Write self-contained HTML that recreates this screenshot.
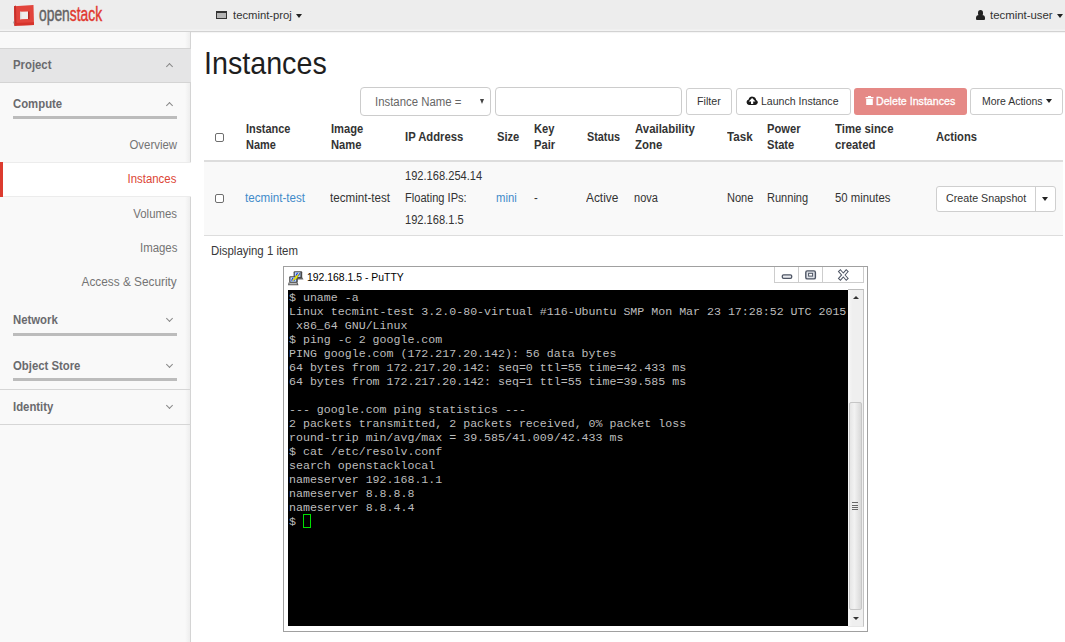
<!DOCTYPE html>
<html><head><meta charset="utf-8">
<style>
*{margin:0;padding:0;box-sizing:border-box}
html,body{width:1065px;height:642px;overflow:hidden;background:#fff;font-family:"Liberation Sans",sans-serif;color:#333}
.a{position:absolute;white-space:nowrap;line-height:1;transform-origin:0 0}
.r{transform-origin:100% 0}
.sh{font-weight:bold;color:#6a6a6e;font-size:12px;transform:scaleX(.945)}
.si{color:#747474;font-size:12px;transform:scaleX(.95)}
.ul{position:absolute;left:13px;width:164px;height:3px;background:#bcbcbc}
.hline{position:absolute;left:0;width:191px;height:1px;background:#d6d6d6}
.chev{position:absolute;width:5px;height:5px;border-left:1px solid #888;border-top:1px solid #888}
.th{font-weight:bold;color:#333;font-size:12px;line-height:15.7px;transform:scaleX(.93)}
.td{color:#333;font-size:12px;transform:scaleX(.94)}
.bt{font-size:11px;color:#333;transform:scaleX(.96)}
.btn{position:absolute;border:1px solid #cfcfcf;border-radius:3px;background:#fff}
.car{position:absolute;width:0;height:0;border-left:3px solid transparent;border-right:3px solid transparent;border-top:4px solid #222}
.term{position:absolute;left:289px;top:291px;font-family:"Liberation Mono",monospace;font-size:11.625px;line-height:14px;color:#bdbdbd;white-space:pre}
</style></head><body>

<!-- header -->
<div class="a" style="left:0;top:0;width:1065px;height:32px;background:linear-gradient(180deg,#ededed 0,#ededed 29px,#f3f3f3 30px);border-bottom:1px solid #d2d2d2;box-shadow:0 1px 1px rgba(0,0,0,.04)"></div>
<svg class="a" style="left:12px;top:4px" width="24" height="23" viewBox="0 0 24 23">
 <path d="M2 2.2 L21.5 1 L22 21 L2.5 21.8 Z" fill="#e2443c"/>
 <path d="M2 2.2 L4 1.6 L4.5 21.6 L2.5 21.8Z" fill="#c8302a"/>
 <path d="M2.5 19 L22 18.3 L22 21 L2.5 21.8Z" fill="#d6332b"/>
 <path d="M8 7.8 L16 7.6 L16 15 L8 15.2Z" fill="#eeeeee"/>
 <path d="M8 7.8 L9.3 7.8 L9.3 15.2 L8 15.2Z" fill="#d8d8d8"/>
 <path d="M16 7.6 L17.5 7.4 L17.5 15.6 L16 15 Z" fill="#b02a24"/>
 <path d="M1 18 L2.3 17 L2.5 21.8 L3 22.5 Z" fill="#777" opacity=".6"/>
</svg>
<div class="a" style="left:39px;top:4.3px;font-size:20.5px;color:#626262;transform:scaleX(.675);-webkit-text-stroke:0.45px #626262">open<span style="color:#e1382f;-webkit-text-stroke:0.45px #e1382f">stack</span></div>
<div class="a" style="left:216px;top:11px;width:11px;height:8px;border:1px solid #333;border-top-width:2px;background:#b5b5b5"></div>
<div class="a" style="left:233px;top:9.6px;font-size:11.5px;color:#333;transform:scaleX(.98)">tecmint-proj</div>
<div class="car" style="left:296px;top:14px"></div>

<div class="a" style="left:976px;top:10px;width:9px;height:10px;">
 <div style="position:absolute;left:2px;top:0;width:5px;height:5.5px;border-radius:50%;background:#222"></div>
 <div style="position:absolute;left:0;top:5px;width:9px;height:5px;border-radius:3px 3px 1px 1px;background:#222"></div>
</div>
<div class="a" style="left:989.6px;top:9.6px;font-size:11.5px;color:#333;transform:scaleX(.99)">tecmint-user</div>
<div class="car" style="left:1057px;top:14px"></div>

<!-- sidebar -->
<div class="a" style="left:0;top:32px;width:191px;height:610px;background:linear-gradient(90deg,#f9f9f9 0,#f9f9f9 185px,#eeeeee 190px);border-right:1px solid #d4d4d4"></div>
<div class="a" style="left:0;top:48px;width:191px;height:35px;background:#e5e5e6;border-top:1px solid #d4d4d4;border-bottom:1px solid #d4d4d4"></div>
<div class="a sh" style="left:13px;top:58.6px">Project</div>
<div class="chev" style="left:167px;top:64px;transform:rotate(45deg)"></div>
<div class="a sh" style="left:13px;top:98.2px">Compute</div>
<div class="chev" style="left:167px;top:103px;transform:rotate(45deg)"></div>
<div class="ul" style="top:116px"></div>
<div class="a si r" style="right:888px;top:138.7px">Overview</div>
<div class="a" style="left:0;top:162px;width:191px;height:35px;background:#fff;border-top:1px solid #ececec;border-bottom:1px solid #ececec"></div>
<div class="a" style="left:0;top:162px;width:3px;height:35px;background:#dc3b2f"></div>
<div class="a si r" style="right:889px;top:172.9px;color:#dc4535">Instances</div>
<div class="a si r" style="right:888px;top:207.5px">Volumes</div>
<div class="a si r" style="right:888px;top:242px">Images</div>
<div class="a si r" style="right:888px;top:275.8px;transform:scaleX(.984)">Access &amp; Security</div>
<div class="a sh" style="left:13px;top:313.7px">Network</div>
<div class="chev" style="left:167px;top:316px;transform:rotate(-135deg)"></div>
<div class="ul" style="top:333px"></div>
<div class="a sh" style="left:13px;top:359.6px">Object Store</div>
<div class="chev" style="left:167px;top:362px;transform:rotate(-135deg)"></div>
<div class="ul" style="top:378px"></div>
<div class="hline" style="top:389px"></div>
<div class="a sh" style="left:13px;top:400.5px">Identity</div>
<div class="chev" style="left:167px;top:403px;transform:rotate(-135deg)"></div>
<div class="hline" style="top:424px"></div>

<!-- main -->
<div class="a" style="left:203.7px;top:48px;font-size:30.5px;color:#1e1e1e;transform:scaleX(.94)">Instances</div>

<div class="a" style="left:360px;top:87px;width:131px;height:29px;border:1px solid #cccccc;border-radius:4px"></div>
<div class="a" style="left:375px;top:96.1px;font-size:12px;color:#666;transform:scaleX(.948)">Instance Name =</div>
<div class="a" style="left:480px;top:98.5px;width:0;height:0;border-left:2.8px solid transparent;border-right:2.8px solid transparent;border-top:5px solid #444"></div>
<div class="a" style="left:495px;top:87px;width:187px;height:29px;border:1px solid #cccccc;border-radius:4px"></div>
<div class="btn" style="left:686px;top:88px;width:46px;height:27px"></div>
<div class="a bt" style="left:697.3px;top:95.6px;transform:scaleX(.97)">Filter</div>
<div class="btn" style="left:736px;top:88px;width:115px;height:27px"></div>
<svg class="a" style="left:746px;top:96px" width="12" height="9" viewBox="0 0 12 9"><path d="M2.8 9 H9.3 A2.6 2.6 0 0 0 10.2 4 A3.9 3.9 0 0 0 2.6 3.4 A2.9 2.9 0 0 0 2.8 9Z" fill="#1a1a1a"/><path d="M6.1 1.9 L9.5 5.4 H7.2 V8 H5 V5.4 H2.7Z" fill="#fff"/></svg>
<div class="a bt" style="left:761px;top:95.6px">Launch Instance</div>
<div class="a" style="left:854px;top:88px;width:113px;height:27px;background:#e58986;border-radius:3px"></div>
<svg class="a" style="left:865px;top:96px" width="9" height="9" viewBox="0 0 9 9"><rect x="0.5" y="1" width="8" height="1.3" fill="#fff"/><rect x="3" y="0" width="3" height="1.5" fill="#fff"/><rect x="1.2" y="2.8" width="6.6" height="6.2" fill="#fff"/></svg>
<div class="a bt" style="left:876px;top:95.6px;color:#fff;transform:scaleX(.967);-webkit-text-stroke:0.3px #fff">Delete Instances</div>
<div class="btn" style="left:970px;top:88px;width:93px;height:27px"></div>
<div class="a bt" style="left:981.6px;top:95.6px;transform:scaleX(.953)">More Actions</div>
<div class="car" style="left:1046px;top:99px"></div>

<!-- table header -->
<div class="a" style="left:215px;top:133px;width:9px;height:9px;border:1px solid #6e6e6e;border-radius:2px;background:#fff"></div>
<div class="a th" style="left:245.5px;top:122.1px;transform:scaleX(.912)">Instance<br>Name</div>
<div class="a th" style="left:330.5px;top:122.1px">Image<br>Name</div>
<div class="a th" style="left:404.6px;top:129.7px;transform:scaleX(.938)">IP Address</div>
<div class="a th" style="left:496.7px;top:129.7px">Size</div>
<div class="a th" style="left:534px;top:122.1px">Key<br>Pair</div>
<div class="a th" style="left:587.4px;top:129.7px;transform:scaleX(.90)">Status</div>
<div class="a th" style="left:634.6px;top:122.1px;transform:scaleX(.95)">Availability<br>Zone</div>
<div class="a th" style="left:726.6px;top:129.7px;transform:scaleX(.97)">Task</div>
<div class="a th" style="left:767.1px;top:122.1px">Power<br>State</div>
<div class="a th" style="left:835.2px;top:122.1px;transform:scaleX(.946)">Time since<br>created</div>
<div class="a th" style="left:935.5px;top:129.7px;transform:scaleX(.93)">Actions</div>
<div class="a" style="left:204px;top:160px;width:859px;height:2px;background:#dddddd"></div>
<div class="a" style="left:204px;top:162px;width:859px;height:74px;background:#f9f9f9;border-bottom:1px solid #dddddd"></div>

<div class="a" style="left:215px;top:194px;width:9px;height:9px;border:1px solid #6e6e6e;border-radius:2px;background:#fff"></div>
<div class="a td" style="left:245px;top:192.4px;color:#428bca;transform:scaleX(.968)">tecmint-test</div>
<div class="a td" style="left:330px;top:192.4px;transform:scaleX(.968)">tecmint-test</div>
<div class="a td" style="left:405px;top:166.1px;line-height:21.85px;transform:scaleX(.925)">192.168.254.14<br>Floating IPs:<br>192.168.1.5</div>
<div class="a td" style="left:496.2px;top:192.4px;color:#428bca">mini</div>
<div class="a td" style="left:533.7px;top:192px">-</div>
<div class="a td" style="left:586.3px;top:192.4px;transform:scaleX(.99)">Active</div>
<div class="a td" style="left:634.4px;top:192.4px;transform:scaleX(.92)">nova</div>
<div class="a td" style="left:726.7px;top:192.4px;transform:scaleX(.92)">None</div>
<div class="a td" style="left:766.8px;top:192.4px;transform:scaleX(.92)">Running</div>
<div class="a td" style="left:834.7px;top:192.4px;transform:scaleX(.945)">50 minutes</div>
<div class="btn" style="left:936px;top:186px;width:120px;height:26px;border-radius:3px"></div>
<div class="a" style="left:1035px;top:186px;width:1px;height:26px;background:#cfcfcf"></div>
<div class="a" style="left:945.7px;top:193px;font-size:11.5px;color:#333;transform:scaleX(.93)">Create Snapshot</div>
<div class="car" style="left:1042px;top:197px"></div>

<div class="a" style="left:211.4px;top:244.9px;font-size:12px;color:#383838;transform:scaleX(.952)">Displaying 1 item</div>

<!-- PuTTY -->
<div class="a" style="left:283px;top:266px;width:585px;height:366px;background:#fff;border:1px solid #a0a0a0"></div>
<svg class="a" style="left:285px;top:268px" width="22" height="20" viewBox="0 0 22 20">
 <path d="M10.5 9.5 H17.5 L18.5 11.5 H11Z" fill="#6a6a6a"/>
 <rect x="8.6" y="3.2" width="8.6" height="7" rx="1" fill="#4a4a4a"/>
 <rect x="9.8" y="4.3" width="5.6" height="4.6" fill="#b8d8ff"/>
 <path d="M10.5 7.5 L12 4.8 L13 5 L11.5 8Z M13 7.8 L14.5 5 L15.2 5.5 L13.8 8.2Z" fill="#1030e0"/>
 <path d="M3.5 14.5 H12.5 L13.5 17.2 H3Z" fill="#5a5a5a"/>
 <path d="M4.5 15.2 H11.5 L12 16.2 H4.2Z" fill="#dcdcdc"/>
 <rect x="4.2" y="8.2" width="8.6" height="6.6" rx="1" fill="#4a4a4a"/>
 <rect x="5.4" y="9.3" width="5.8" height="4.4" fill="#b8d8ff"/>
 <path d="M6 12.5 L7.5 9.8 L8.5 10 L7 12.7Z M8.6 12.8 L10 10.2 L10.8 10.6 L9.4 13Z" fill="#1030e0"/>
 <path d="M7 12.3 L10.5 9.2 L10 8.6 L14.8 5.4 L12 9.3 L12.8 9.7 L8.5 12.6Z" fill="#f0f000" stroke="#a08000" stroke-width=".3"/>
</svg>
<div class="a" style="left:307.3px;top:272.3px;font-size:11.5px;color:#000;transform:scaleX(.906)">192.168.1.5 - PuTTY</div>
<div class="a" style="left:774px;top:267px;width:90px;height:16px;border:1px solid #cdcdcd;border-top:none;background:#fff"></div>
<div class="a" style="left:798px;top:267px;width:1px;height:15px;background:#cdcdcd"></div>
<div class="a" style="left:822px;top:267px;width:1px;height:15px;background:#cdcdcd"></div>
<svg class="a" style="left:778px;top:268px" width="74" height="13" viewBox="0 0 74 13">
 <rect x="4.3" y="6.8" width="9.4" height="3.6" rx="1.3" fill="#e8eaee" stroke="#4e5564" stroke-width="1.3"/>
 <rect x="27.8" y="2.9" width="9.6" height="8" rx="1.5" fill="#dfe2e8" stroke="#4e5564" stroke-width="1.4"/>
 <rect x="30.6" y="5.3" width="4" height="2.8" fill="#fff" stroke="#4e5564" stroke-width="1"/>
 <path d="M62.3 3.6 L68.3 10.4 M68.3 3.6 L62.3 10.4" stroke="#4e5564" stroke-width="3.6" stroke-linecap="square"/>
 <path d="M62.3 3.6 L68.3 10.4 M68.3 3.6 L62.3 10.4" stroke="#fff" stroke-width="1.6" stroke-linecap="square"/>
</svg>

<div class="a" style="left:288px;top:290px;width:560px;height:336px;background:#000"></div>
<div class="a" style="left:848px;top:289px;width:16px;height:338px;background:linear-gradient(90deg,#f7f7f7,#efefef 30%,#efefef);border-top:1px solid #bdbdbd;border-right:1px solid #c4c4c4;border-bottom:1px solid #e6e6e6"></div>
<div class="car" style="left:853px;top:296px;border-top:none;border-bottom:3px solid #333"></div>
<div class="a" style="left:849px;top:402px;width:13px;height:208px;background:linear-gradient(90deg,#e6e6e6,#f2f2f2 40%,#d9d9d9);border:1px solid #c6c6c6;border-radius:2px"></div>
<div class="a" style="left:852px;top:502px;width:6px;height:8px;background:repeating-linear-gradient(180deg,#666 0 1px,transparent 1px 2.5px)"></div>
<div class="car" style="left:853px;top:617px;border-top:3px solid #333"></div>

<div class="term">$ uname -a
Linux tecmint-test 3.2.0-80-virtual #116-Ubuntu SMP Mon Mar 23 17:28:52 UTC 2015
 x86_64 GNU/Linux
$ ping -c 2 google.com
PING google.com (172.217.20.142): 56 data bytes
64 bytes from 172.217.20.142: seq=0 ttl=55 time=42.433 ms
64 bytes from 172.217.20.142: seq=1 ttl=55 time=39.585 ms

--- google.com ping statistics ---
2 packets transmitted, 2 packets received, 0% packet loss
round-trip min/avg/max = 39.585/41.009/42.433 ms
$ cat /etc/resolv.conf
search openstacklocal
nameserver 192.168.1.1
nameserver 8.8.8.8
nameserver 8.8.4.4
$ </div>
<div class="a" style="left:303px;top:514px;width:8px;height:14px;border:1.3px solid #00e000"></div>

</body></html>
